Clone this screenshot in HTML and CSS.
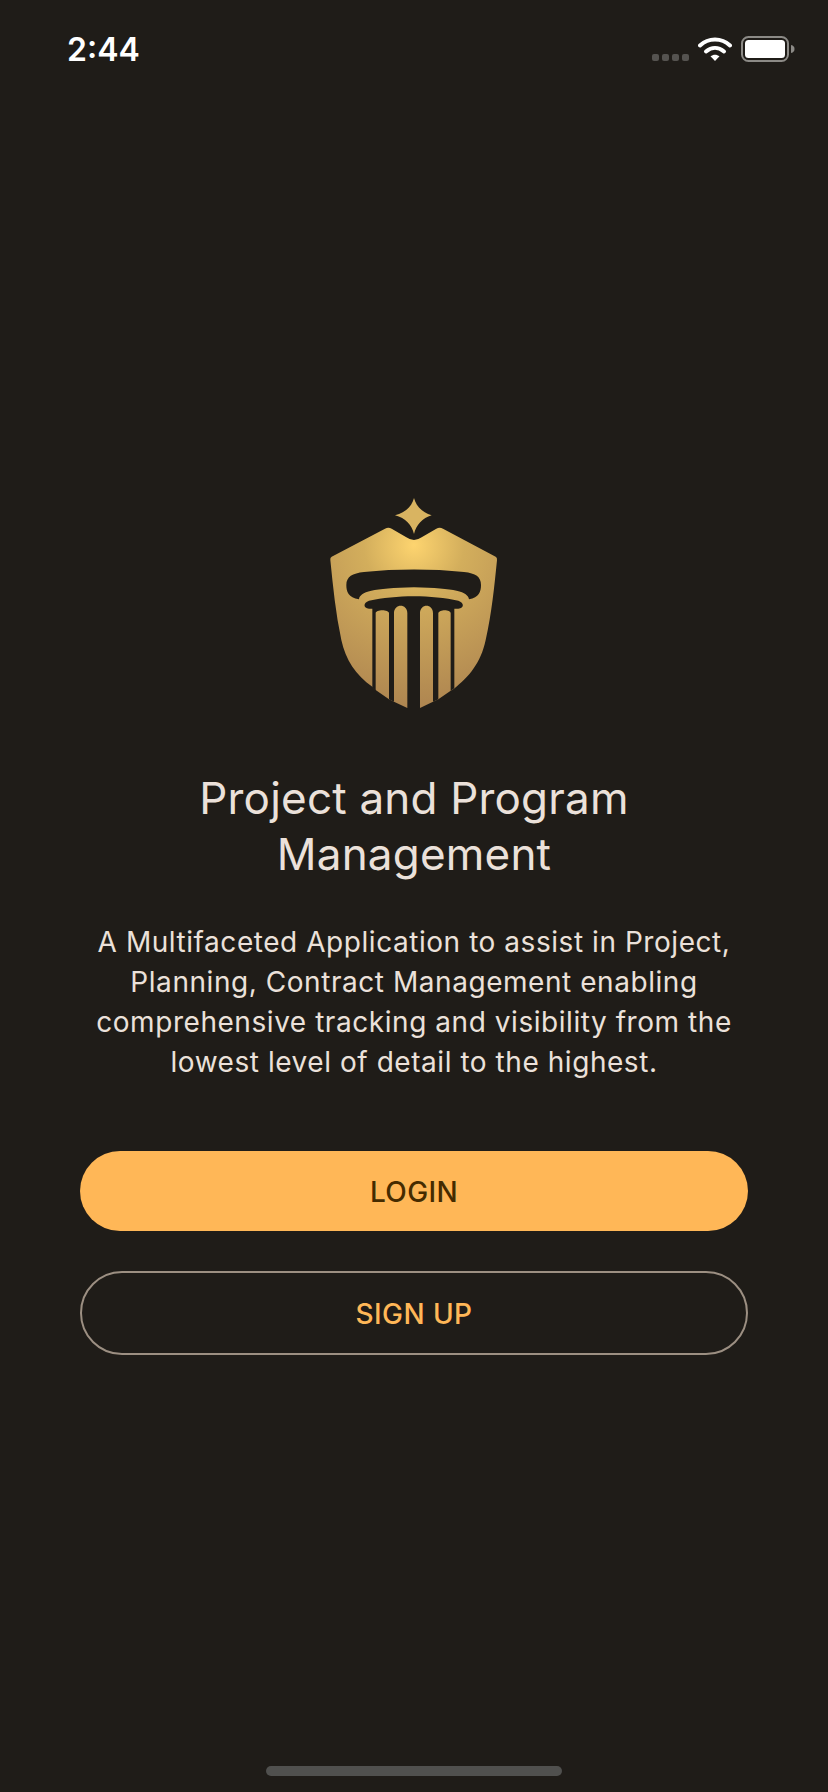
FILE: index.html
```html
<!DOCTYPE html>
<html lang="en">
  <head>
    <meta charset="UTF-8" />
    <meta name="viewport" content="width=device-width, initial-scale=1.0" />
    <title>Project and Program Management</title>
    <link rel="stylesheet" href="styles.css">
  </head>
  <body>
    <div class="screen">
      <div class="status-bar">
        <span class="time">2:44</span>
        <div class="status-icons">
          <div class="signal"><i></i><i></i><i></i><i></i></div>
          <svg class="wifi" width="34" height="26" viewBox="0 0 34 26">
            <path d="M2 9.500C10.500 1.500 23.500 1.500 32 9.500" fill="none" stroke="#fff" stroke-width="4" stroke-linecap="round"/>
            <path d="M8 15.500C13.500 10.800 20.500 10.800 26 15.500" fill="none" stroke="#fff" stroke-width="4" stroke-linecap="round"/>
            <path d="M12.500 20.300C15.300 18.200 18.700 18.200 21.500 20.300L17 25Z" fill="#fff"/>
          </svg>
          <svg class="battery" width="54" height="26" viewBox="0 0 54 26">
            <rect x="1" y="1" width="46" height="24" rx="6.500" fill="none" stroke="#8c8a86" stroke-width="2"/>
            <rect x="4" y="4" width="40" height="18" rx="3.500" fill="#fff"/>
            <path d="M50 9C52.500 9.500 53.500 11 53.500 13C53.500 15 52.500 16.500 50 17Z" fill="#8c8a86"/>
          </svg>
        </div>
      </div>

      <div class="content">
        <svg class="logo" width="210" height="240" viewBox="0 0 630 720">
          <defs>
            <radialGradient id="gold" gradientUnits="userSpaceOnUse" cx="315" cy="195" r="500">
              <stop offset="0" stop-color="#fdd46f"/>
              <stop offset="0.3" stop-color="#d3ae5c"/>
              <stop offset="1" stop-color="#ad8450"/>
            </radialGradient>
          </defs>
          <path fill="#d9b461" d="M315 54C322 80 340 97 368 106C340 115 322 134 315 162C308 134 290 115 258 106C290 97 308 80 315 54Z"/>
          <path fill="url(#gold)" d="M68 230L228 146Q238 141 248 146L292 172Q315 188 338 172L382 146Q392 141 402 146L560 230Q565 233 564 240C556 320 548 400 530 480C515 550 480 590 435 626L425 632L388 658L372 665L333 684L295 684L255 665L240 658L200 630L190 620C140 585 110 540 97 480C80 400 72 320 64 240Q63 233 68 230Z"/>
          <g fill="#1f1c18">
            <path d="M150 358C118 352 112 335 112 315C112 290 130 280 165 276C260 266 370 266 465 276C500 280 516 290 516 315C516 335 510 352 480 358C476 335 440 325 315 322C190 325 154 335 150 358Z"/>
            <path d="M180 386C162 384 162 368 180 362C260 344 370 344 448 362C466 368 466 384 448 386L436 386L436 625L425 632L425 400C425 388 390 388 388 400L388 658L372 665L372 400C372 370 333 370 333 400L333 690L295 690L295 400C295 370 255 370 255 400L255 665L240 658L240 400C240 388 200 388 200 400L200 632L190 622L190 386Z"/>
          </g>
        </svg>

        <h1 class="title">Project and Program Management</h1>
        <p class="desc">A Multifaceted Application to assist in Project, Planning, Contract Management enabling comprehensive tracking and visibility from the lowest level of detail to the highest.</p>

        <button class="btn btn-login">LOGIN</button>
        <button class="btn btn-signup">SIGN UP</button>
      </div>

      <div class="home-bar"></div>
    </div>
  </body>
</html>
```

FILE: styles.css
```css
* {
  box-sizing: border-box;
}
body {
  margin: 0;
  background-color: #1f1c18;
  font-family: Inter, "Noto Sans", sans-serif;
}
.screen {
  height: 1792px;
  display: flex;
  flex-direction: column;
}

/* Status bar */
.status-bar {
  height: 88px;
  padding: 28px 33px 0 67px;
  display: flex;
  justify-content: space-between;
  align-items: flex-start;
}
.time {
  color: #fff;
  font-size: 32px;
  font-weight: 600;
  line-height: 44px;
}
.status-icons {
  display: flex;
  align-items: center;
  gap: 9px;
  padding-top: 8px;
}
.signal {
  display: flex;
  gap: 3px;
  margin-top: 16px;
}
.signal i {
  width: 7px;
  height: 7px;
  border-radius: 2px;
  background-color: #555350;
}

/* Main */
.content {
  flex: 1;
  padding: 392px 80px 0;
  display: flex;
  flex-direction: column;
  align-items: center;
}
.logo {
  display: block;
}
.title {
  margin: 50px 0 0;
  width: 480px;
  text-align: center;
  color: #ebe1da;
  font-size: 44px;
  font-weight: 400;
  line-height: 56px;
  letter-spacing: 0.2px;
}
.desc {
  margin: 40px -10px 0;
  text-align: center;
  color: #ebe1da;
  font-size: 28px;
  line-height: 40px;
  letter-spacing: 0.55px;
}
.btn {
  display: block;
  width: 100%;
  font-family: inherit;
  font-size: 28px;
  font-weight: 500;
  letter-spacing: 0.4px;
  border-radius: 42px;
  padding: 2px 0 0;
  cursor: pointer;
}
.btn-login {
  height: 80px;
  margin-top: 69px;
  border: none;
  background-color: #ffb757;
  color: #452b00;
}
.btn-signup {
  height: 84px;
  margin-top: 40px;
  border: 2px solid #9c8f82;
  background: none;
  color: #ffb757;
}
.home-bar {
  width: 296px;
  height: 10px;
  margin: 0 auto 16px;
  border-radius: 5px;
  background-color: #50504e;
}
```
